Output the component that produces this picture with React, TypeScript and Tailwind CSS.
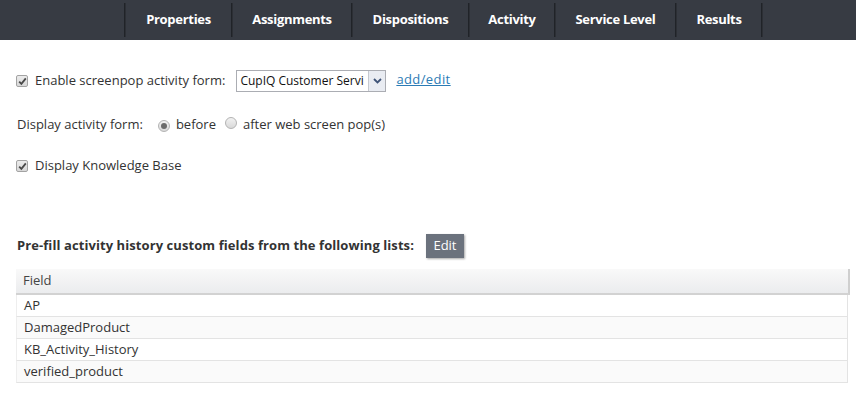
import React from "react";

const tabs = [
  { label: "Properties", w: "w-[105px]" },
  { label: "Assignments", w: "w-[118px]" },
  { label: "Dispositions", w: "w-[115px]" },
  { label: "Activity", w: "w-[84px]" },
  { label: "Service Level", w: "w-[119px]" },
  { label: "Results", w: "w-[84px]" },
];

function Sep() {
  return <div className="w-[2px] h-[34px] bg-[#202328] border-r border-[#2c2f35]" />;
}

function Check() {
  return (
    <span className="inline-flex items-center justify-center w-[12px] h-[12px] border border-[#a3a3a3] rounded-[2px] bg-gradient-to-b from-[#ececec] to-[#d8d8d8]">
      <svg width="9" height="9" viewBox="0 0 9 9">
        <path d="M1.2 4.6 L3.4 6.9 L7.8 1.4" fill="none" stroke="#4a4a4a" strokeWidth="1.8" />
      </svg>
    </span>
  );
}

function Radio({ on }: { on?: boolean }) {
  return (
    <span className="inline-flex items-center justify-center w-[12px] h-[12px] rounded-full border border-[#b3b3b3] bg-gradient-to-b from-[#f2f2f2] to-[#d9d9d9]">
      {on && <span className="w-[6px] h-[6px] rounded-full bg-[#6b6b6b]" />}
    </span>
  );
}

const rows = ["AP", "DamagedProduct", "KB_Activity_History", "verified_product"];

export default function App() {
  return (
    <div className="w-[856px] h-[411px] bg-white text-[13px] text-[#333] overflow-hidden" style={{ fontFamily: '"Open Sans", sans-serif' }}>
      <div className="h-[40px] bg-[#373b43] flex items-center pl-[124px]">
        <Sep />
        {tabs.map((t) => (
          <React.Fragment key={t.label}>
            <div className={`${t.w} h-full flex items-center justify-center text-white font-bold text-[13px] tracking-[-0.3px]`}>
              {t.label}
            </div>
            <Sep />
          </React.Fragment>
        ))}
      </div>

      <div className="pl-[16px] pt-[30px]">
        <div className="flex items-center h-[22px]">
          <Check />
          <span className="ml-[7px]">Enable screenpop activity form:</span>
          <div className="ml-[11px] w-[150px] h-[22px] border border-[#abadb3] flex">
            <div className="w-[131px] pl-[3px] text-[12px] leading-[20px] overflow-hidden whitespace-nowrap text-[#111]">CupIQ Customer Servi</div>
            <div className="w-[17px] h-full bg-[#e9ecf2] border-l border-[#c6c9d0] flex items-center justify-center">
              <svg width="9" height="6" viewBox="0 0 9 6">
                <path d="M1 1 L4.5 4.5 L8 1" fill="none" stroke="#3f5478" strokeWidth="1.8" />
              </svg>
            </div>
          </div>
          <a className="ml-[10px] text-[#2b7bb5] underline -mt-[2px] tracking-[0.4px]">add/edit</a>
        </div>

        <div className="flex items-center h-[22px] mt-[22px] pl-[1px]">
          <span>Display activity form:</span>
          <span className="ml-[15px]"><Radio on /></span>
          <span className="ml-[6px]">before</span>
          <span className="ml-[9px]"><Radio /></span>
          <span className="ml-[6px]">after web screen pop(s)</span>
        </div>

        <div className="flex items-center h-[22px] mt-[19px]">
          <Check />
          <span className="ml-[7px]">Display Knowledge Base</span>
        </div>

        <div className="flex items-center h-[24px] mt-[57px] pl-[1px]">
          <span className="font-bold tracking-[0.08px]">Pre-fill activity history custom fields from the following lists:</span>
          <button className="ml-[12px] h-[24px] w-[38px] bg-[#6b727d] text-white text-[13px] shadow-[1px_1px_2px_rgba(0,0,0,0.35)]">Edit</button>
        </div>

        <div className="mt-[11px] w-[834px]">
          <div className="h-[26px] flex items-center pl-[7px] bg-gradient-to-b from-[#f9f9f9] to-[#ebecee] border-b-2 border-[#d2d2d2] border-r-2 border-r-[#cfcfcf] text-[#444]">
            Field
          </div>
          {rows.map((r, i) => (
            <div key={r} className={`h-[22px] flex items-center pl-[7px] border-b border-[#e3e3e3] border-l border-l-[#eeeeee] border-r border-r-[#e3e3e3] mr-[2px] ${i % 2 ? "bg-[#fafafa]" : "bg-white"}`}>
              {r}
            </div>
          ))}
        </div>
      </div>
    </div>
  );
}
